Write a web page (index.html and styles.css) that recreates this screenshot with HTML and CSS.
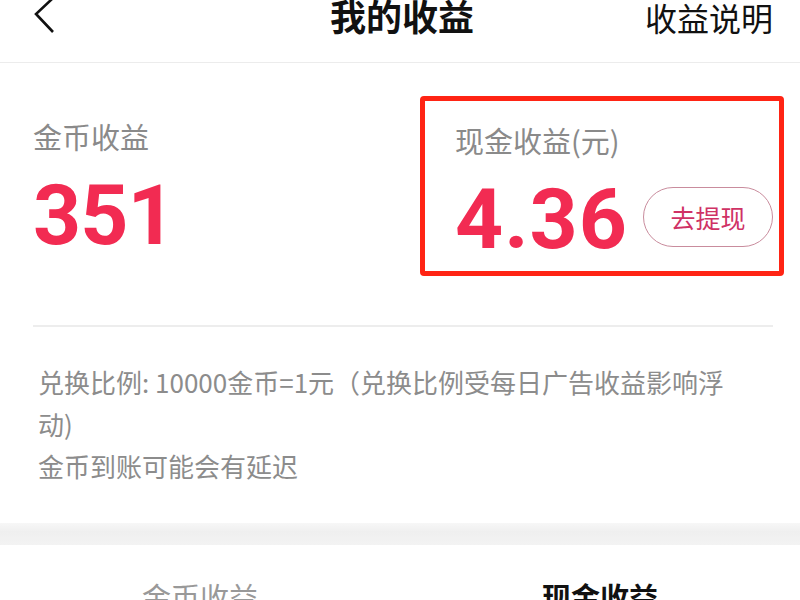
FILE: index.html
```html
<!DOCTYPE html>
<html lang="zh-CN">

<head>
  <meta charset="UTF-8">
  <meta name="viewport" content="width=device-width, initial-scale=1.0">
  <title>我的收益</title>
  <link rel="stylesheet" href="styles.css">
</head>

<body>
  <div class="page">
    <header class="topbar">
      <span class="back">
        <svg width="24" height="36" viewBox="0 0 24 36">
          <path d="M19 -1 L3 14 L20 32" fill="none" stroke="#111" stroke-width="2.6" />
        </svg>
      </span>
      <h1>我的收益</h1>
      <span class="explain">收益说明</span>
    </header>

    <section class="stats">
      <article class="stat">
        <div class="stat-label">金币收益</div>
        <div class="stat-row">
          <span class="stat-value">351</span>
        </div>
      </article>
      <article class="stat cash">
        <div class="stat-label">现金收益(元)</div>
        <div class="stat-row">
          <span class="stat-value">4.36</span>
          <button class="withdraw">去提现</button>
        </div>
      </article>
    </section>

    <div class="divider"></div>

    <section class="notes">
      <p>兑换比例: 10000金币=1元（兑换比例受每日广告收益影响浮动)</p>
      <p>金币到账可能会有延迟</p>
    </section>

    <div class="band"></div>

    <nav class="tabs">
      <span class="tab">金币收益</span>
      <span class="tab active">现金收益</span>
    </nav>
  </div>
</body>

</html>
```

FILE: styles.css
```css
html,
body {
  margin: 0;
  background: #fff;
}

body {
  font-family: "Noto Sans CJK SC", "Noto Sans", sans-serif;
  color: #111;
}

.page {
  width: 800px;
  height: 600px;
  overflow: hidden;
}

.topbar {
  height: 62px;
  display: grid;
  grid-template-columns: 1fr auto 1fr;
  align-items: start;
  border-bottom: 1px solid #ececec;
}

.topbar .back {
  padding-left: 33px;
  height: 34px;
}

.topbar h1 {
  margin: 0;
  padding-left: 4px;
  font-size: 36px;
  line-height: 30px;
  font-weight: 700;
}

.topbar .explain {
  justify-self: end;
  font-size: 32px;
  line-height: 34px;
  padding-right: 27px;
}

.stats {
  display: flex;
  padding: 33px 16px 0 33px;
}

.stat {
  flex: 1;
  padding: 23px 0 14px;
}

.stat.cash {
  flex: none;
  width: 318px;
  padding: 22px 6px 9px 30px;
  border: 5px solid #ff2414;
  border-radius: 4px;
}

.stat-label {
  font-size: 29px;
  line-height: 34px;
  color: #8a8a8a;
}

.stat-row {
  display: flex;
  align-items: center;
  margin-top: 21px;
}

.stat-value {
  font-family: Roboto, "Liberation Sans", sans-serif;
  font-size: 84px;
  line-height: 84px;
  font-weight: 700;
  color: #f22b52;
  letter-spacing: -1px;
}

.cash .stat-value {
  letter-spacing: 1px;
}

.withdraw {
  margin-left: auto;
  margin-bottom: 6px;
  width: 130px;
  height: 60px;
  border: 1px solid #c98c9d;
  border-radius: 30px;
  background: #fff;
  color: #cf3265;
  font-family: "Noto Sans CJK SC", sans-serif;
  font-size: 25px;
  outline: none;
}

.divider {
  margin: 49px 27px 0 33px;
  height: 2px;
  background: #ededed;
}

.notes {
  width: 700px;
  padding: 34px 0 0 38px;
  font-size: 26px;
  line-height: 42px;
  color: #8c8c8c;
}

.notes p {
  margin: 0;
}

.band {
  margin-top: 36px;
  height: 22px;
  background: linear-gradient(#f7f7f7, #efefef 40%, #f3f3f3);
}

.tabs {
  display: flex;
  padding-top: 30px;
}

.tab {
  flex: 1;
  text-align: center;
  font-size: 29px;
  color: #999;
}

.tab.active {
  color: #111;
  font-weight: 700;
}
```
